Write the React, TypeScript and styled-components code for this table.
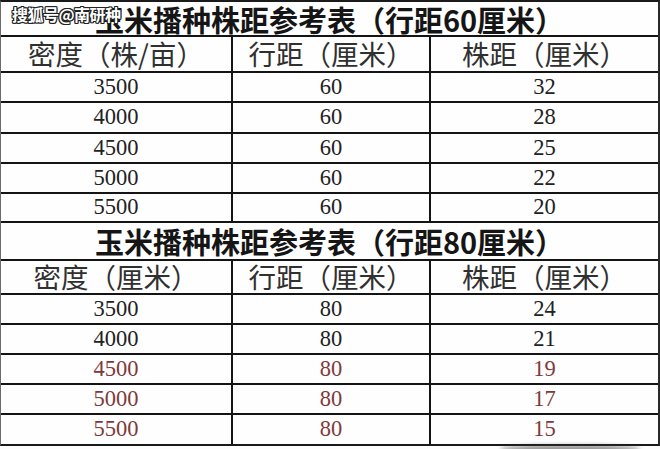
import { Fragment } from "react";
import styled, { createGlobalStyle } from "styled-components";

const GlobalStyle = createGlobalStyle`
  html, body {
    margin: 0;
    padding: 0;
    background: #fdfdfd;
  }
  * {
    box-sizing: border-box;
  }
`;

interface Section {
  title: string;
  titleHeight: number;
  headers: string[];
  headerHeight: number;
  rows: { values: string[]; height: number; warn?: boolean }[];
}

const sections: Section[] = [
  {
    title: "玉米播种株距参考表（行距60厘米）",
    titleHeight: 33,
    headers: ["密度（株/亩）", "行距（厘米）", "株距（厘米）"],
    headerHeight: 34,
    rows: [
      { values: ["3500", "60", "32"], height: 28 },
      { values: ["4000", "60", "28"], height: 29 },
      { values: ["4500", "60", "25"], height: 28 },
      { values: ["5000", "60", "22"], height: 28 },
      { values: ["5500", "60", "20"], height: 27 },
    ],
  },
  {
    title: "玉米播种株距参考表（行距80厘米）",
    titleHeight: 36,
    headers: ["密度（厘米）", "行距（厘米）", "株距（厘米）"],
    headerHeight: 32,
    rows: [
      { values: ["3500", "80", "24"], height: 28 },
      { values: ["4000", "80", "21"], height: 28 },
      { values: ["4500", "80", "19"], height: 28, warn: true },
      { values: ["5000", "80", "17"], height: 28, warn: true },
      { values: ["5500", "80", "15"], height: 29, warn: true },
    ],
  },
];

const rowTemplate = sections
  .flatMap((s) => [s.titleHeight, s.headerHeight, ...s.rows.map((r) => r.height)])
  .map((h) => `${h}px`)
  .join(" ");

const Page = styled.div`
  position: relative;
  width: 660px;
  height: 449px;
  overflow: hidden;
  background: #fdfdfd;
`;

const Sheet = styled.div<{ $rows: string }>`
  display: grid;
  grid-template-columns: 230px 196px 227px;
  grid-template-rows: ${(p) => p.$rows};
  gap: 2px;
  width: 660px;
  background: #141414;
  border-top: 2px solid #1a1a1a;
  border-left: 1px solid #6a6a6a;
  border-right: 2px solid #2a2a2a;
  border-bottom: 2px solid #1a1a1a;
`;

const Cell = styled.div`
  display: flex;
  align-items: center;
  justify-content: center;
  background: #fefefe;
  white-space: nowrap;
  line-height: 1;
`;

const TitleCell = styled(Cell)`
  grid-column: 1 / -1;
  padding-top: 1px;
  font-family: "Noto Sans CJK SC", "Noto Sans", sans-serif;
  font-weight: 700;
  font-size: 29px;
  color: #151515;
`;

const HeadCell = styled(Cell)`
  font-family: "Noto Sans CJK SC", "Noto Sans", sans-serif;
  font-weight: 400;
  font-size: 27.5px;
  color: #303030;
`;

const DataCell = styled(Cell)<{ $warn?: boolean }>`
  font-family: "Liberation Serif", "Times New Roman", serif;
  font-size: 22.5px;
  color: ${(p) => (p.$warn ? "#7e3a3a" : "#222")};
`;

const Watermark = styled.div`
  position: absolute;
  left: 12px;
  top: 6px;
  font-family: "Noto Sans CJK SC", sans-serif;
  font-weight: 700;
  font-size: 16px;
  line-height: 1.1;
  letter-spacing: -0.5px;
  color: #ffffff;
  text-shadow: 1px 0 0 #222, -1px 0 0 #222, 0 1px 0 #222, 0 -1px 0 #222,
    1px 1px 0 #222, -1px -1px 0 #222, 1px -1px 0 #222, -1px 1px 0 #222;
`;

const Smudge = styled.div`
  position: absolute;
  left: 500px;
  bottom: -4px;
  width: 140px;
  height: 8px;
  border-radius: 50%;
  background: rgba(60, 60, 60, 0.55);
  filter: blur(2px);
`;

export default function App() {
  return (
    <Page>
      <GlobalStyle />
      <Sheet $rows={rowTemplate}>
        {sections.map((s) => (
          <Fragment key={s.title}>
            <TitleCell>{s.title}</TitleCell>
            {s.headers.map((h, i) => (
              <HeadCell key={h + i}>{h}</HeadCell>
            ))}
            {s.rows.map((r, ri) =>
              r.values.map((v, ci) => (
                <DataCell key={`${ri}-${ci}`} $warn={r.warn}>
                  {v}
                </DataCell>
              ))
            )}
          </Fragment>
        ))}
      </Sheet>
      <Watermark>搜狐号@南研种</Watermark>
      <Smudge />
    </Page>
  );
}
